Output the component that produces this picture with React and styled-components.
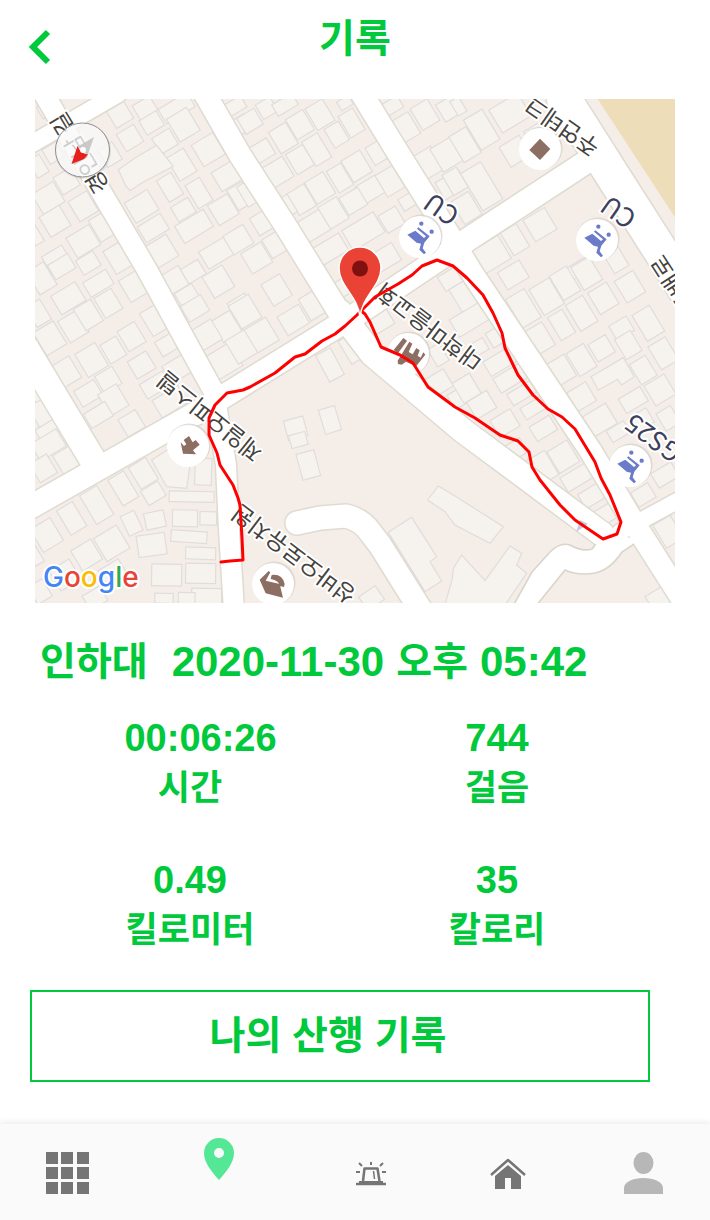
import React from 'react';
import styled, { createGlobalStyle } from 'styled-components';

const GREEN = '#00c93c';

const GlobalStyle = createGlobalStyle`
  *, *::before, *::after { box-sizing: border-box; }
  body {
    margin: 0;
    background: #fff;
    color: ${GREEN};
    font-family: "Liberation Sans", "Noto Sans CJK KR", sans-serif;
  }
`;

const Screen = styled.div`
  display: flex;
  flex-direction: column;
  min-height: 100vh;
`;

const Header = styled.header`
  display: grid;
  grid-template-columns: 80px 1fr 80px;
  height: 99px;
`;

const BackButton = styled.button`
  display: flex;
  align-items: flex-start;
  padding: 28px 0 0 28px;
  border: 0;
  background: none;
  cursor: pointer;
`;

const Title = styled.h1`
  margin: 0;
  padding-top: 11px;
  font-size: 39px;
  line-height: 56px;
  font-weight: 700;
  text-align: center;
`;

const MapFrame = styled.section`
  margin: 0 35px;
  line-height: 0;
`;

const MapSvg = styled.svg`
  display: block;
  width: 100%;
  height: auto;
`;

const Heading = styled.h2`
  display: flex;
  align-items: center;
  gap: 12px;
  margin: 0;
  padding: 31px 40px 0;
  font-size: 42px;
  line-height: 56px;
  font-weight: 700;
  white-space: pre;
`;

const Hangul = styled.span`
  font-size: 39px;
`;

const Place = styled(Hangul)`
  margin-right: 12px;
`;

const Stats = styled.dl`
  display: grid;
  grid-template-columns: 310fr 304fr;
  row-gap: 42px;
  margin: 0;
  padding: 23px 61px 0 35px;
`;

const Stat = styled.div`
  display: flex;
  flex-direction: column-reverse;
  text-align: center;
`;

const StatValue = styled.dd`
  margin: 0;
  font-size: 38px;
  line-height: 50px;
  font-weight: 700;
`;

const StatLabel = styled.dt`
  font-size: 35px;
  line-height: 50px;
  font-weight: 700;
`;

const HistoryButton = styled.button`
  height: 92px;
  margin: 35px 60px 39px 30px;
  padding: 0 24px 0 0;
  border: 2px solid ${GREEN};
  background: #fff;
  color: ${GREEN};
  font-family: inherit;
  font-size: 39px;
  line-height: 56px;
  font-weight: 700;
  cursor: pointer;
`;

const TabBar = styled.nav`
  display: grid;
  grid-template-columns: 135fr 168fr 136fr 138fr 133fr;
  height: 96px;
  margin-top: auto;
  background: #fafafa;
  box-shadow: 0 -2px 6px rgba(0, 0, 0, 0.08);
`;

const Tab = styled.a`
  display: flex;
  justify-content: center;
  align-items: flex-start;
  padding-top: ${(p) => p.$top}px;
`;

/* Footprints are [centre x, centre y, width, height, angle] in thirds of a map unit. */
const TILES = [
  {
    x: 35, y: 98,
    rects: [[255,50,60,60],[330,30,60,50],[425,30,100,50],[350,75,60,50],[285,120,60,60],[445,80,70,80],[390,130,60,55],[520,155,75,75],[440,200,60,80],[575,235,70,65],[405,268,50,75],[492,285,50,80],[445,335,60,50],[320,325,80,70],[355,390,80,55],[477,385,100,60],[565,335,70,70],[615,295,50,70],[380,460,75,75],[545,465,90,60],[610,425,70,65],[40,300,75,70],[60,370,70,70],[145,325,65,70],[205,385,60,75],[145,430,80,70],[250,480,60,80],[65,485,70,60],[160,495,60,50],[10,205,40,60],[0,410,30,60],[95,250,60,60],[55,165,50,50],[620,80,50,50],[600,25,60,40],[40,30,60,40],[225,170,50,60]],
    polys: ['250,215 300,180 365,142 415,205 320,255 285,278 272,262'],
  },
  {
    x: 245, y: 98,
    rects: [[15,70,60,55],[65,30,50,50],[120,20,70,40],[115,120,60,75],[165,80,60,70],[225,50,60,75],[275,110,50,65],[320,75,50,75],[50,160,65,55],[165,185,60,70],[215,155,55,85],[95,225,80,70],[285,240,50,75],[335,205,65,75],[395,165,45,60],[225,270,65,75],[170,305,60,75],[125,325,40,60],[375,275,70,60],[435,250,60,75],[265,345,65,75],[325,310,65,60],[205,385,80,70],[355,400,110,70],[440,365,60,60],[255,455,95,60],[420,480,80,60],[300,15,40,30],[480,90,65,75],[540,50,60,75],[615,30,65,60],[550,195,65,80],[605,170,70,80],[620,260,80,60],[440,25,60,40],[490,310,50,40],[50,375,50,60],[90,440,55,65],[35,480,70,70],[5,290,30,70]],
    polys: [],
  },
  {
    x: 455, y: 98,
    rects: [[165,45,100,80],[80,95,65,105],[30,140,60,90],[180,160,70,70],[80,265,70,130],[35,330,60,80],[0,250,50,70],[255,380,75,75],[110,470,90,80],[180,425,55,80],[240,110,50,50],[375,510,80,40],[480,480,50,80],[10,25,30,50]],
    polys: [],
  },
  {
    x: 35, y: 265,
    rects: [[20,40,60,80],[80,5,70,50],[100,100,85,65],[190,55,80,50],[220,115,60,70],[115,185,65,75],[160,150,60,75],[295,65,60,75],[45,220,70,80],[10,145,50,70],[360,165,60,80],[290,215,60,70],[235,255,55,65],[395,240,55,50],[170,285,70,80],[95,320,60,75],[320,300,65,60],[220,345,60,60],[160,385,70,55],[235,405,65,75],[190,450,75,50],[290,475,60,60],[430,310,80,60],[360,360,80,50],[405,410,90,60],[15,440,50,80],[40,495,70,40],[0,380,30,60],[420,45,60,65],[475,20,60,50],[550,50,70,75],[455,90,60,45],[480,130,70,55],[620,130,60,70],[575,185,65,75],[515,210,70,70],[565,290,90,80],[620,245,70,80]],
    polys: [],
  },
  {
    x: 245, y: 265,
    rects: [[95,75,65,75],[205,120,60,75],[0,140,70,80],[145,165,75,65],[50,210,75,80],[400,170,80,60],[255,300,50,90,-28],[315,255,35,80],[152,490,60,60,-15],[255,465,50,75,-17],[290,70,50,50],[580,355,70,60],[620,40,70,50],[580,270,40,60],[640,400,50,50]],
    polys: [],
  },
  {
    x: 455, y: 265,
    rects: [[175,30,75,60],[275,95,70,90],[330,55,60,85],[395,25,65,80],[205,130,65,100],[380,145,60,90],[320,180,50,80],[445,100,65,75],[525,65,65,75],[500,190,60,50],[580,175,60,90],[625,265,60,80],[255,220,60,80],[440,250,60,60],[380,285,60,80],[520,240,55,70],[320,315,60,75],[565,315,55,70],[380,395,65,65],[615,375,70,70],[535,405,75,50],[435,465,80,70],[35,95,70,90],[50,160,120,60],[125,215,50,50],[135,290,90,50],[165,340,90,50],[200,385,80,40],[235,430,70,40],[265,490,70,50],[35,370,60,70],[80,420,70,60],[150,475,70,60],[560,465,60,50],[640,460,50,60],[75,245,40,40],[490,500,60,40]],
    polys: ['408,335 505,278 538,335 500,360 488,343 430,375'],
  },
  {
    x: 35, y: 435,
    rects: [[40,30,90,60],[95,75,60,65],[25,100,60,65],[110,250,55,85],[35,300,70,80],[185,210,60,100],[265,160,55,90],[325,115,60,75],[355,175,60,50],[290,265,45,65,-25],[360,255,60,50,-12],[350,330,85,65,-8],[470,185,135,32,1],[450,250,75,50,1],[520,250,50,40,1],[462,305,108,35,4],[497,355,90,36,2],[395,420,90,65,1],[497,415,90,60,1],[515,485,90,50,1],[455,490,50,35,1],[387,490,55,30,1],[505,110,50,80,2],[230,325,80,80],[155,360,70,70],[0,360,30,60],[235,415,70,60],[180,490,60,50],[90,420,70,70],[15,470,50,60]],
    polys: ['350,75 420,30 465,90 455,160 395,155'],
  },
  {
    x: 245, y: 435,
    rects: [[160,15,50,40,-15],[190,90,55,80,-15],[380,490,60,50,-35]],
    polys: ['430,292 500,247 575,365 555,380 590,438 540,470'],
  },
  {
    x: 455, y: 435,
    rects: [[620,490,80,60],[260,100,70,85],[325,65,70,75],[370,125,100,50],[415,180,80,50],[450,240,70,50],[565,180,60,50],[630,120,70,50],[640,290,60,80],[180,45,60,50]],
    polys: ['-82,195 -50,153 0,183 145,275 105,325 0,270 -30,230', '-5,400 20,360 90,437 165,333 200,355 185,390 215,415 150,510 -30,510 -8,430'],
  },
];

const ROADS = [
  { d: 'M28 146 L118 94', w: 17 },
  { d: 'M22 342 L76 432 L94 462', w: 26 },
  { d: 'M44 94 L106 200 L146 268 L182 334 L214 392 L226 465 L229 530 L234 610', w: 20 },
  { d: 'M205 94 L240 155 L287 228 L345 322', w: 22 },
  { d: 'M362 94 L395 148 L440 220 L470 270 L510 330 L560 405 L590 450 L632 520 L686 605', w: 22 },
  { d: 'M340 312 L372 354 L462 430 L602 534', w: 24 },
  { d: 'M564 99 L611 173 L690 297', w: 34 },
  { d: 'M20 513 L200 411 L360 312 L467 240 L600 153', w: 23 },
  { d: 'M620 532 L690 494', w: 16 },
  { d: 'M297 523 L320 518 L346 516 Q362 520 370 532 L380 545 L422 612', w: 23 },
];

const LABELS = [
  { text: '제일오피스텔', x: 210, y: 416, a: 219 },
  { text: '대학마을교회', x: 429, y: 326, a: 217 },
  { text: '성바오로유치원', x: 294, y: 554, a: 217 },
  { text: '주연테크', x: 562, y: 126, a: 215 },
  { text: 'CU', x: 442, y: 208, a: 215, blue: true },
  { text: 'CU', x: 619, y: 211, a: 215, blue: true },
  { text: 'GS25', x: 654, y: 437, a: 216, blue: true },
  { text: '경인남 길', x: 80, y: 153, a: 239 },
  { text: '독배로', x: 674, y: 284, a: 237 },
];

const ROUTE =
  'M221 562 L230 561 L243 560 L242 538 L240 505 L238 498 L233 485 L220 465 L217 453 L209 435 L209 418 L215 405 L227 393 L243 390 L250 387 L275 373 L295 357 L305 354 L322 341 L335 334 L345 326 L357 315 L375 297 L398 284 L412 275 L422 266 L437 260 L453 266 L467 278 L483 295 L493 313 L502 333 L505 348 L518 375 L533 395 L548 409 L562 417 L575 429 L595 462 L601 478 L610 495 L621 522 L617 534 L603 539 L575 520 L560 505 L540 480 L532 467 L529 452 L518 441 L500 435 L475 418 L455 407 L428 387 L413 363 L400 355 L381 347 L370 322 L365 314 L360 310';

function PoiDot({ x, y, children }) {
  return (
    <g transform={`translate(${x} ${y})`}>
      <circle cx="1" cy="-1" r="21.5" fill="#d4cfc8" opacity="0.7" />
      <circle r="21" fill="#fff" />
      <g transform="scale(0.3333)">{children}</g>
    </g>
  );
}

function Cart() {
  return (
    <g fill="#6b7bca">
      <path d="M-38 -7 L-14 -19 L12 3 L18 -2 L-9 -25 L-5 -29 L29 -2 L13 17 L8 34 L18 47 L12 52 L-2 38 L3 20 L-10 17 Z" />
      <circle cx="4" cy="-40" r="6.5" />
      <circle cx="35" cy="-16" r="6.5" />
    </g>
  );
}

function RouteMap() {
  return (
    <MapSvg viewBox="35 99 640 504" role="img" aria-label="산행 경로 지도">
      <rect x="35" y="99" width="640" height="504" fill="#f5ede7" />
      <path d="M597 98 H676 V219 Z" fill="#eeddb9" />
      {TILES.map((t) => (
        <g key={`${t.x}-${t.y}`} transform={`translate(${t.x} ${t.y}) scale(0.3333)`} fill="#f6f3ee" stroke="#e0dcdc" strokeWidth="3.5">
          {t.rects.map(([cx, cy, w, h, a = -31]) => (
            <rect key={`${cx}-${cy}`} x={cx - w / 2} y={cy - h / 2} width={w} height={h} transform={`rotate(${a} ${cx} ${cy})`} />
          ))}
          {t.polys.map((p) => <polygon key={p} points={p} />)}
        </g>
      ))}
      <g fill="none" stroke="#dfdbd1" strokeLinejoin="round" strokeLinecap="round">
        {ROADS.map((r) => <path key={r.d} d={r.d} strokeWidth={r.w + 3} />)}
      </g>
      <path d="M513 606 L532 572 L550 552 Q560 542 570 545 Q582 552 592 549 L606 530 L640 540 L622 552 Q610 570 595 573 Q578 576 565 570 L536 606 Z" fill="#fff" stroke="#d9d5ca" strokeWidth="1.6" />
      <g fill="none" stroke="#fff" strokeLinejoin="round" strokeLinecap="round">
        {ROADS.map((r) => <path key={r.d} d={r.d} strokeWidth={r.w} />)}
      </g>
      <path d="M576 532 L580 520 L588 524 Z" fill="#c5c9e6" />

      <PoiDot x={420} y={237}><Cart /></PoiDot>
      <PoiDot x={597} y={240}><Cart /></PoiDot>
      <PoiDot x={630} y={466}><Cart /></PoiDot>
      <PoiDot x={540} y={149}><path d="M0 -31 L31 0 L0 33 L-32 3 Z" fill="#8d6e63" /></PoiDot>
      <PoiDot x={188} y={446}>
        <path d="M-22 -11 L-15 23 L24 25 L15 13 L35 -4 L23 -18 L14 -11 L3 -30 L-13 -18 L-5 -5 L-12 0 Z" fill="#8d6e63" />
      </PoiDot>
      <PoiDot x={273} y={584}>
        <path d="M-40 -13 L-13 -39 L-8 -35 L-22 -10 L20 0 L30 41 L-22 28 Z M-4 -27 Q28 -31 35 0 L33 9 L21 6 Q18 -11 -7 -15 Z" fill="#8d6e63" />
      </PoiDot>
      <PoiDot x={408} y={354}>
        <path d="M-14 -48 L-3 -40 L-30 -2 L-43 -12 Z M4 -37 L13 -31 L2 -6 L14 1 L25 -18 L35 -11 L29 5 L38 11 L46 -5 L52 2 L22 40 L9 30 L-6 23 L-19 32 L-30 30 L-31 20 Z" fill="#8d6e63" />
      </PoiDot>

      <g fontFamily='"Noto Sans CJK KR", sans-serif' textAnchor="middle" stroke="#fff" strokeWidth="4" strokeLinejoin="round" paintOrder="stroke">
        {LABELS.map((l) => (
          <text
            key={`${l.text}-${l.x}`}
            transform={`translate(${l.x} ${l.y}) rotate(${l.a})`}
            y="8"
            fontSize={l.blue ? 26 : 23}
            fill={l.blue ? '#3d405c' : '#45423e'}
          >
            {l.text}
          </text>
        ))}
      </g>

      <path d={ROUTE} fill="none" stroke="#ff0000" strokeWidth="3" strokeLinejoin="round" strokeLinecap="round" />

      <path d="M360 317 C358 296 339 286 339 268 A21 21 0 0 1 381 268 C381 286 362 296 360 317 Z" fill="#ea4335" stroke="#fff" strokeWidth="1.5" />
      <circle cx="360" cy="268.500" r="8" fill="#7f1210" />

      <circle cx="83" cy="151" r="28" fill="#000" opacity="0.08" />
      <circle cx="82.500" cy="150" r="27" fill="#fff" fillOpacity="0.75" stroke="#8f8f8f" strokeWidth="1" />
      <path d="M94 137 L77 147 Q84 148 87 157 Z" fill="#c9c9c9" />
      <path d="M71.500 164 L77.500 146 Q81 154 88 154.500 L84 159 Z" fill="#e8201c" />
      <circle cx="83" cy="150" r="3" fill="#fff" />

      <text x="43" y="587" fontFamily="Inter, sans-serif" fontSize="28" fontWeight="500" stroke="#fff" strokeWidth="4" strokeLinejoin="round" paintOrder="stroke">
        <tspan fill="#4285f4">G</tspan>
        <tspan fill="#ea4335">o</tspan>
        <tspan fill="#fbbc05">o</tspan>
        <tspan fill="#4285f4">g</tspan>
        <tspan fill="#34a853">l</tspan>
        <tspan fill="#ea4335">e</tspan>
      </text>
    </MapSvg>
  );
}

const STATS = [
  { value: '\u00a0\u00a000:06:26', label: '시간' },
  { value: '744', label: '걸음' },
  { value: '0.49', label: '킬로미터' },
  { value: '35', label: '칼로리' },
];

export default function App() {
  return (
    <Screen>
      <GlobalStyle />
      <Header>
        <BackButton type="button" aria-label="뒤로">
          <svg width="24" height="38" viewBox="0 0 24 38">
            <path d="M20 4 L5 19 L20 34" fill="none" stroke={GREEN} strokeWidth="6" />
          </svg>
        </BackButton>
        <Title>기록</Title>
      </Header>

      <MapFrame>
        <RouteMap />
      </MapFrame>

      <Heading>
        <Place>인하대</Place>
        <span>2020-11-30</span>
        <Hangul>오후</Hangul>
        <span>05:42</span>
      </Heading>

      <Stats>
        {STATS.map((s) => (
          <Stat key={s.label}>
            <StatLabel>{s.label}</StatLabel>
            <StatValue>{s.value}</StatValue>
          </Stat>
        ))}
      </Stats>

      <HistoryButton type="button">나의 산행 기록</HistoryButton>

      <TabBar>
        <Tab href="#menu" aria-label="메뉴" $top={28}>
          <svg width="43" height="42" viewBox="0 0 43 42" fill="#757575">
            {[0, 15, 31].map((x) => [0, 15, 30].map((y) => (
              <rect key={`${x}-${y}`} x={x} y={y} width="12" height="12" />
            )))}
          </svg>
        </Tab>
        <Tab href="#record" aria-label="기록" $top={14}>
          <svg width="30" height="42" viewBox="0 0 30 42">
            <path d="M15 0 A15 15 0 0 0 0 15 C0 25 8 34 15 42 C22 34 30 25 30 15 A15 15 0 0 0 15 0 Z M15 10 A5 5 0 1 1 15 20 A5 5 0 1 1 15 10 Z" fill="#53e796" fillRule="evenodd" />
          </svg>
        </Tab>
        <Tab href="#sos" aria-label="긴급" $top={37}>
          <svg width="30" height="25" viewBox="0 0 30 25" fill="none" stroke="#757575">
            <path d="M7 20 L8.500 7.500 H21.500 L23.500 20" strokeWidth="2.500" strokeLinejoin="round" />
            <path d="M17.500 10 L18.500 18" strokeWidth="1.500" />
            <path d="M3 21 H27" strokeWidth="2" />
            <path d="M0 23 H30" strokeWidth="2.500" />
            <path d="M15 1 V4 M3 2 L6 5 M27 2 L24 5 M0 11 H4 M26 11 H30" strokeWidth="2" />
          </svg>
        </Tab>
        <Tab href="#home" aria-label="홈" $top={34}>
          <svg width="36" height="32" viewBox="0 0 36 32">
            <path d="M1 17 L18 2 L35 17" fill="none" stroke="#757575" strokeWidth="2.500" strokeLinejoin="round" />
            <path d="M5 18 L18 7 L31 18 V31 H21 V20 H15 V31 H5 Z" fill="#757575" />
          </svg>
        </Tab>
        <Tab href="#profile" aria-label="내 정보" $top={28}>
          <svg width="39" height="42" viewBox="0 0 39 42" fill="#b7b7b7">
            <ellipse cx="19.500" cy="11" rx="10" ry="11" />
            <path d="M0 42 V36 C0 30 9 26 19.500 26 C30 26 39 30 39 36 V42 Z" />
          </svg>
        </Tab>
      </TabBar>
    </Screen>
  );
}
